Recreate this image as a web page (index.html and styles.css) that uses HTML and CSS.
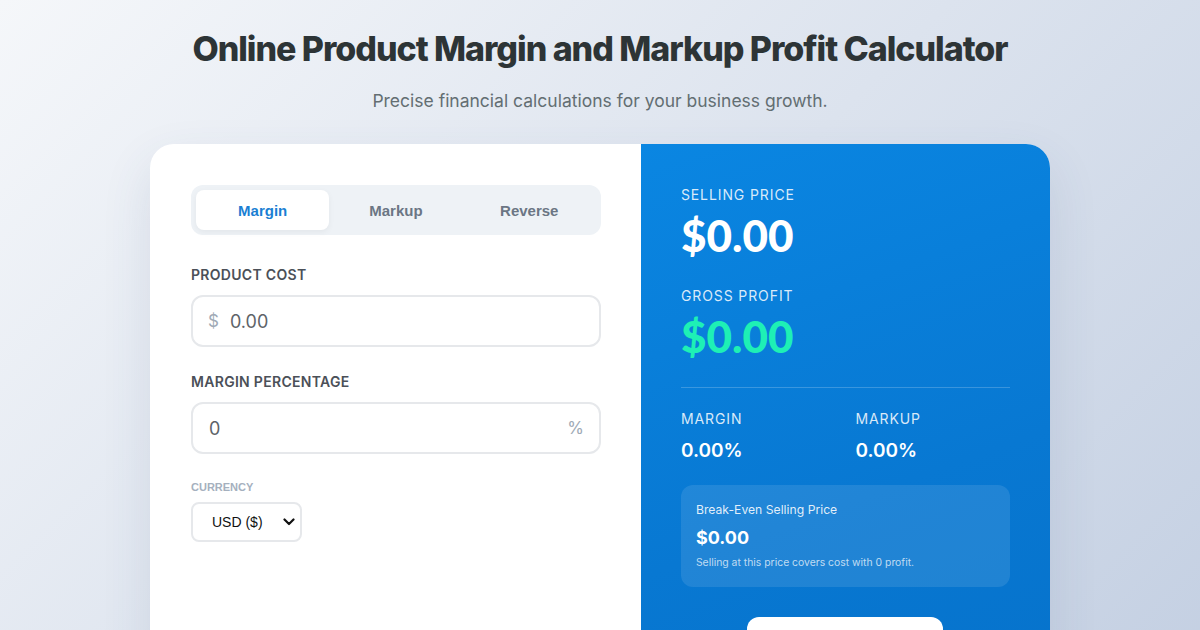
FILE: index.html
```html
<!DOCTYPE html>
<html lang="en">
<head>
<meta charset="utf-8">
<title>Online Product Margin and Markup Profit Calculator</title>
<link rel="stylesheet" href="styles.css">
</head>
<body>
<div class="page">
  <header class="header">
    <h1 class="title">Online Product Margin and Markup Profit Calculator</h1>
    <p class="subtitle">Precise financial calculations for your business growth.</p>
  </header>
  <main class="card">
    <section class="inputs">
      <div class="tabs">
        <button class="tab active">Margin</button>
        <button class="tab">Markup</button>
        <button class="tab">Reverse</button>
      </div>
      <div class="field">
        <label class="label">PRODUCT COST</label>
        <div class="input-box">
          <span class="prefix">$</span>
          <span class="value">0.00</span>
        </div>
      </div>
      <div class="field">
        <label class="label">MARGIN PERCENTAGE</label>
        <div class="input-box">
          <span class="value plain">0</span>
          <span class="suffix">%</span>
        </div>
      </div>
      <div class="field small">
        <label class="label-small">CURRENCY</label>
        <div class="select">
          <span>USD ($)</span>
          <svg class="chev" width="12" height="8" viewBox="0 0 12 8"><path d="M1.5 1.5 L6 6 L10.5 1.5" fill="none" stroke="#111" stroke-width="2.2" stroke-linecap="round" stroke-linejoin="round"/></svg>
        </div>
      </div>
    </section>
    <section class="results">
      <div class="result-label">SELLING PRICE</div>
      <div class="big">$0.00</div>
      <div class="result-label gap">GROSS PROFIT</div>
      <div class="big green">$0.00</div>
      <div class="divider"></div>
      <div class="stats">
        <div class="stat">
          <div class="result-label">MARGIN</div>
          <div class="stat-value">0.00%</div>
        </div>
        <div class="stat">
          <div class="result-label">MARKUP</div>
          <div class="stat-value">0.00%</div>
        </div>
      </div>
      <div class="breakeven">
        <div class="be-title">Break-Even Selling Price</div>
        <div class="be-value">$0.00</div>
        <div class="be-note">Selling at this price covers cost with 0 profit.</div>
      </div>
      <div class="btn-row">
        <button class="btn" aria-label="Copy results"></button>
      </div>
    </section>
  </main>
</div>
</body>
</html>
```
FILE: styles.css
```css
* { box-sizing: border-box; }
html, body { margin: 0; padding: 0; }
body {
  min-height: 100vh;
  background: linear-gradient(135deg, #f5f7fa 0%, #c3cfe2 100%);
  font-family: "Inter", "Liberation Sans", sans-serif;
  overflow: hidden;
}
.page {
  width: 900px;
  margin: 0 auto;
  padding-top: 28px;
}
.header { text-align: center; }
.title {
  margin: 0;
  font-family: "Inter", sans-serif;
  font-weight: 800;
  font-size: 34px;
  line-height: 41px;
  letter-spacing: -1.03px;
  color: #2d3436;
}
.subtitle {
  margin: 18px 0 0;
  font-size: 17.5px;
  line-height: 27px;
  color: #636e72;
}
.card {
  margin-top: 30px;
  display: grid;
  grid-template-columns: 1.2fr 1fr;
  background: #fff;
  border-radius: 24px;
  overflow: hidden;
  box-shadow: 0 20px 50px rgba(60, 80, 120, 0.12);
  height: 560px;
}
.inputs { padding: 41px 40px 41px 41px; }
.tabs {
  display: flex;
  background: #eef2f6;
  border-radius: 12px;
  padding: 5px;
  margin-bottom: 30px;
}
.tab {
  flex: 1;
  border: 0;
  background: transparent;
  height: 40px;
  border-radius: 8px;
  font-family: "Liberation Sans", Arial, sans-serif;
  font-weight: 700;
  font-size: 15px;
  color: #6b7684;
}
.tab.active {
  background: #fff;
  color: #1b7fd3;
  box-shadow: 0 2px 6px rgba(0,0,0,0.05);
}
.field { margin-bottom: 25px; }
.label {
  display: block;
  font-size: 14px;
  line-height: 20px;
  font-weight: 600;
  letter-spacing: 0.3px;
  color: #4b5058;
  margin-bottom: 10px;
}
.input-box {
  display: flex;
  align-items: center;
  height: 52px;
  border: 2px solid #e6e8eb;
  border-radius: 12px;
  padding: 0 15px;
  font-size: 18px;
}
.prefix { color: #a0aab6; font-size: 17px; margin-right: 11px; }
.value { color: #5e6368; }
.value.plain { flex: 1; padding-left: 1px; }
.suffix { color: #a0aab6; font-size: 17px; }
.field.small { margin-top: 26px; }
.label-small {
  display: block;
  font-family: "Liberation Sans", Arial, sans-serif;
  font-weight: 700;
  font-size: 11px;
  line-height: 14px;
  color: #a5b0be;
  margin-bottom: 8px;
}
.select {
  display: inline-flex;
  align-items: center;
  justify-content: space-between;
  width: 111px;
  height: 40px;
  border: 2px solid #e6e8eb;
  border-radius: 8px;
  padding: 0 5px 0 19px;
  font-family: "Liberation Sans", Arial, sans-serif;
  font-size: 14px;
  color: #111;
}
.results {
  padding: 40px 40px;
  background: linear-gradient(160deg, #0a86e2 0%, #0878d2 60%, #0672cb 100%);
  color: #fff;
}
.result-label {
  font-size: 14px;
  line-height: 22px;
  letter-spacing: 0.9px;
  color: rgba(255,255,255,0.85);
}
.result-label.gap { margin-top: 26px; }
.big {
  margin-top: 5px;
  font-family: "Lato", sans-serif;
  font-weight: 900;
  font-size: 44px;
  line-height: 48px;
}
.big.green { color: #1ef0b5; }
.divider {
  height: 1px;
  background: rgba(255,255,255,0.2);
  margin: 27px 0 20px;
}
.stats {
  display: grid;
  grid-template-columns: 1fr 1fr;
  gap: 20px;
}
.stat-value {
  margin-top: 7px;
  font-size: 19px;
  line-height: 28px;
  font-weight: 600;
}
.breakeven {
  margin-top: 20px;
  background: rgba(255,255,255,0.1);
  border-radius: 12px;
  padding: 15px 15px 16px;
}
.be-title { font-size: 12.2px; line-height: 20px; color: rgba(255,255,255,0.88); }
.be-value { margin-top: 6px; font-size: 18px; line-height: 24px; font-weight: 700; }
.be-note { margin-top: 5px; font-size: 10.4px; line-height: 16px; color: rgba(255,255,255,0.72); }
.btn-row { display: flex; justify-content: center; margin-top: 30px; }
.btn {
  width: 196px;
  height: 60px;
  border: 0;
  border-radius: 12px;
  background: #fff;
}
```
